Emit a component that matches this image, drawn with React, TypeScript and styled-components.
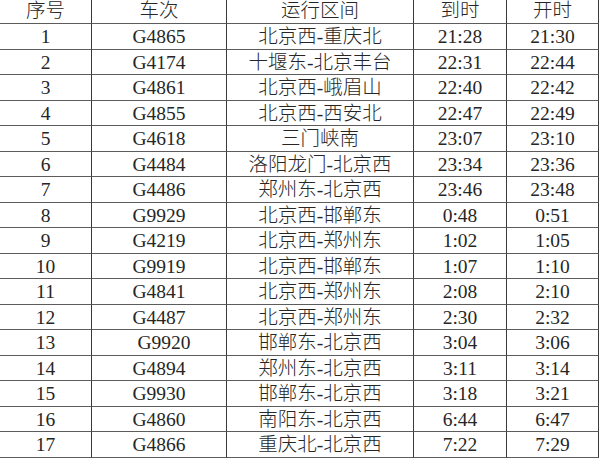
import React from "react";
import styled, { createGlobalStyle } from "styled-components";

const Global = createGlobalStyle`
  html, body { margin: 0; padding: 0; background: #ffffff; }
  body { font-family: "Liberation Serif", "Noto Sans CJK SC", serif; }
`;

const Sheet = styled.div`
  display: grid;
  width: 599px;
  grid-template-columns: 92px 135px 187px 93px 92px;
  grid-template-rows: 24px repeat(17, 25.5px);
  background: #ffffff;
  color: #262626;
  font-family: "Liberation Serif", "Noto Sans CJK SC", serif;
  font-size: 19.5px;
  font-weight: 300;
`;

const Cell = styled.div<{ $shift?: number }>`
  box-sizing: border-box;
  display: flex;
  align-items: center;
  justify-content: center;
  border-right: 1px solid #3a3a3a;
  border-bottom: 1px solid #5c5c5c;
  padding-left: ${(p) => (p.$shift ? `${p.$shift}px` : "0")};
  padding-top: 1px;
  white-space: nowrap;
  line-height: 1;
`;

const HeadCell = styled(Cell)`
  padding-top: 0;
  padding-bottom: 2px;
`;

const headers = ["序号", "车次", "运行区间", "到时", "开时"];

const rows: [string, string, string, string, string][] = [
  ["1", "G4865", "北京西-重庆北", "21:28", "21:30"],
  ["2", "G4174", "十堰东-北京丰台", "22:31", "22:44"],
  ["3", "G4861", "北京西-峨眉山", "22:40", "22:42"],
  ["4", "G4855", "北京西-西安北", "22:47", "22:49"],
  ["5", "G4618", "三门峡南", "23:07", "23:10"],
  ["6", "G4484", "洛阳龙门-北京西", "23:34", "23:36"],
  ["7", "G4486", "郑州东-北京西", "23:46", "23:48"],
  ["8", "G9929", "北京西-邯郸东", "0:48", "0:51"],
  ["9", "G4219", "北京西-郑州东", "1:02", "1:05"],
  ["10", "G9919", "北京西-邯郸东", "1:07", "1:10"],
  ["11", "G4841", "北京西-郑州东", "2:08", "2:10"],
  ["12", "G4487", "北京西-郑州东", "2:30", "2:32"],
  ["13", "G9920", "邯郸东-北京西", "3:04", "3:06"],
  ["14", "G4894", "郑州东-北京西", "3:11", "3:14"],
  ["15", "G9930", "邯郸东-北京西", "3:18", "3:21"],
  ["16", "G4860", "南阳东-北京西", "6:44", "6:47"],
  ["17", "G4866", "重庆北-北京西", "7:22", "7:29"],
];

export default function App() {
  return (
    <>
      <Global />
      <Sheet>
        {headers.map((h) => (
          <HeadCell key={h}>{h}</HeadCell>
        ))}
        {rows.map((r) =>
          r.map((v, i) => (
            <Cell key={r[0] + "-" + i} $shift={r[0] === "13" && i === 1 ? 10 : 0}>
              {v}
            </Cell>
          ))
        )}
      </Sheet>
    </>
  );
}
